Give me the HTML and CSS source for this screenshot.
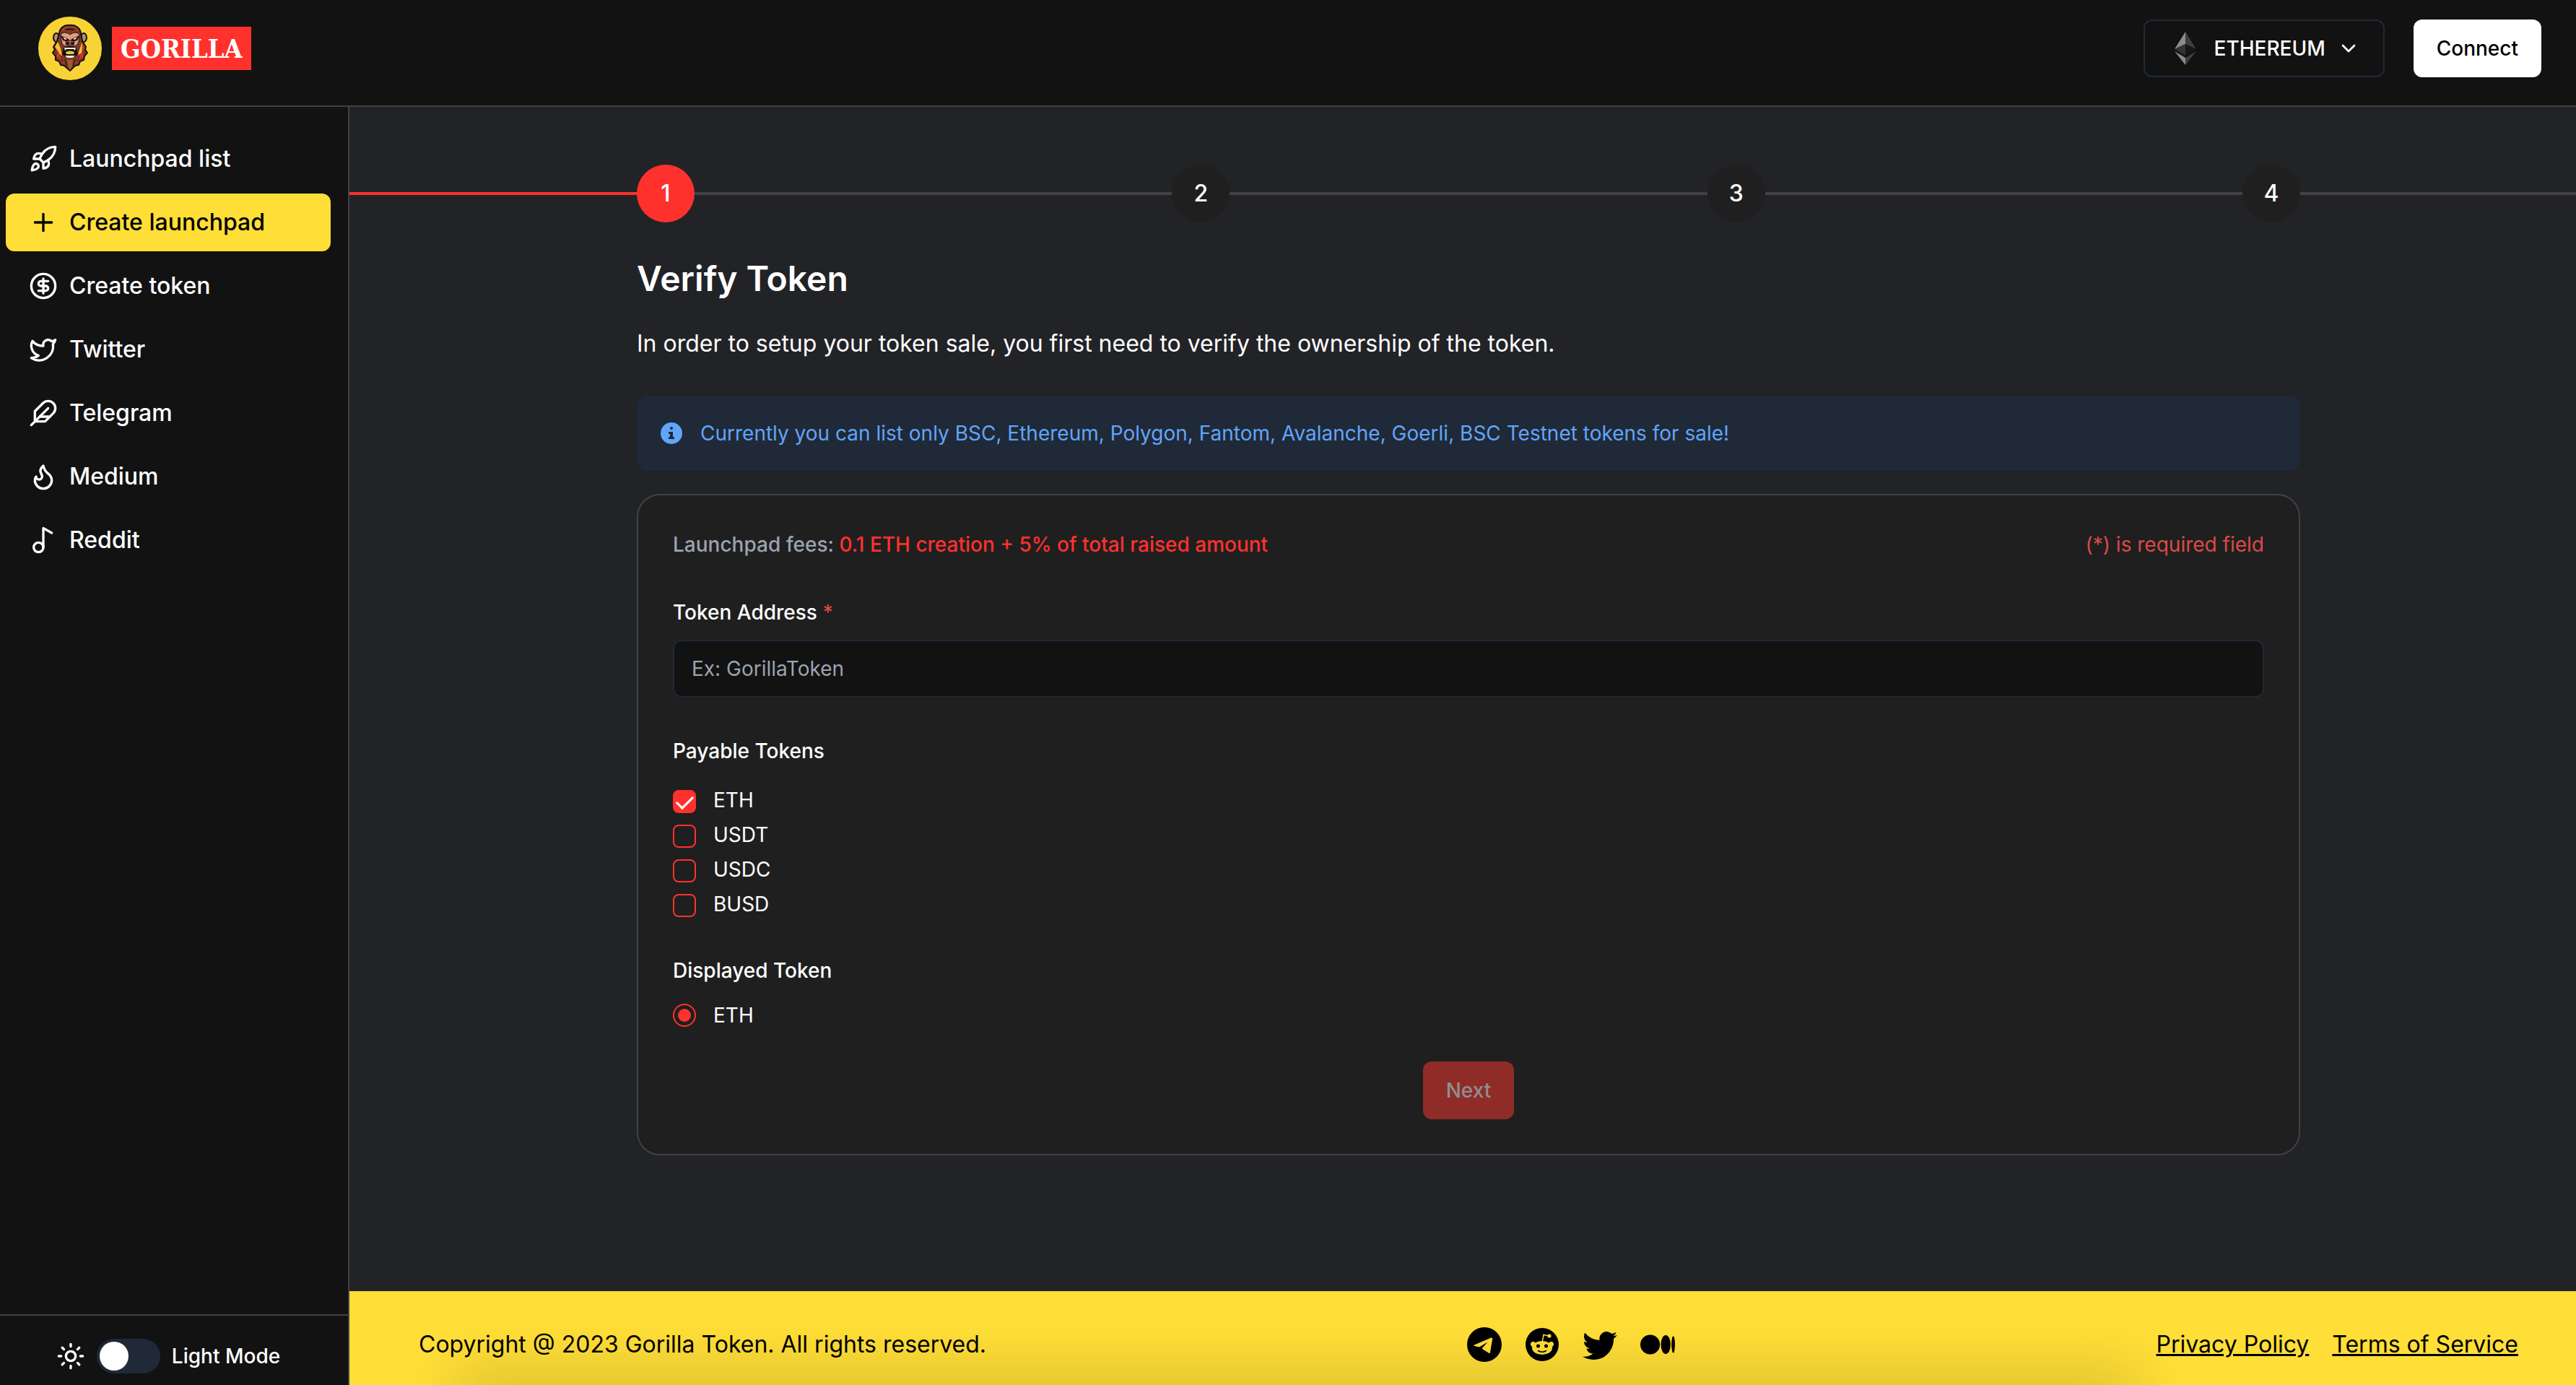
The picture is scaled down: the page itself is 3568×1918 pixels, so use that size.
FILE: index.html
```html
<!DOCTYPE html>
<html lang="en">
<head>
  <meta charset="UTF-8">
  <meta name="viewport" content="width=device-width, initial-scale=1.0">
  <title>Gorilla Launchpad</title>
  <link rel="stylesheet" href="styles.css">
</head>
<body>
  <header class="header">
    <a href="#" class="logo">
      <svg class="logo-icon" viewBox="0 0 88 88" aria-hidden="true">
        <circle cx="44" cy="44" r="44" fill="#f8d335"/>
        <!-- ears -->
        <ellipse cx="25" cy="29" rx="4" ry="6" fill="#b98a78" stroke="#17110f" stroke-width="2"/>
        <ellipse cx="63" cy="29" rx="4" ry="6" fill="#b98a78" stroke="#17110f" stroke-width="2"/>
        <!-- head and beard -->
        <path d="M44 12C35 11 30 16 29 23L26 34L21 42L23 46L20 50L24 55L24 60L29 62L31 67L36 68L44 75L51 68L56 67L58 62L63 60L64 55L68 50L65 46L66 42L61 34L59 23C58 16 52 11 44 12Z" fill="#7b3a22" stroke="#17110f" stroke-width="2"/>
        <path d="M32 21C33 15 38 14 44 14S55 15 56 21L52 18H36Z" fill="#b5392f"/>
        <path d="M36 18C40 15 48 15 52 18L48 19H40Z" fill="#3f1d14"/>
        <path d="M29 36L24 43L27 50L25 55L32 60L36 66L33 54L29 46ZM59 36L64 43L61 50L63 55L56 60L52 66L55 54L59 46Z" fill="#c8392f"/>
        <path d="M27 35L23 42L27 47L30 52L33 54L31 44ZM61 35L58 43L55 53L60 50Z" fill="#f0c433"/>
        <!-- face -->
        <path d="M31 26C33 20 40 22 44 25C48 22 55 20 57 26L56 34C55 40 50 42 44 42S33 40 32 34Z" fill="#e59a80" stroke="#17110f" stroke-width="1"/>
        <path d="M31 26L42 31V35L34 33ZM57 26L46 31V35L54 33Z" fill="#17110f"/>
        <path d="M34 28L40 31L37 32ZM54 28L48 31L51 32Z" fill="#fff"/>
        <path d="M38 35C40 32 48 32 50 35L49 40H39Z" fill="#b9523f" stroke="#17110f" stroke-width="1"/>
        <circle cx="41" cy="37" r="2" fill="#17110f"/>
        <circle cx="47" cy="37" r="2" fill="#17110f"/>
        <!-- mouth -->
        <path d="M35 43C40 40 48 40 53 43L55 52L49 57H39L33 52Z" fill="#17110f"/>
        <path d="M36 43L52 43L51 47L49 45H39L37 47ZM37 54L51 54L48 57H40Z" fill="#f4f0ec"/>
        <path d="M38 49C42 47 46 47 50 49L49 52H39Z" fill="#f0c433"/>
        <path d="M40 60H48L46 71L44 74L42 71Z" fill="#a75a2c"/>
        <path d="M37 59L40 68M51 59L48 68M31 54L34 62M57 54L54 62" stroke="#17110f" stroke-width="1" fill="none"/>
      </svg>
      <span class="logo-text">GORILLA</span>
    </a>
    <div class="header-actions">
      <button class="network-btn" type="button">
        <svg class="eth-icon" viewBox="0 0 48 48" aria-hidden="true">
          <path d="M24 1V18L9 25Z" fill="#8c8c8f"/>
          <path d="M24 1V18L39 25Z" fill="#3e3e42"/>
          <path d="M24 18V34L9 25Z" fill="#343436"/>
          <path d="M24 18V34L39 25Z" fill="#18181a"/>
          <path d="M24 37V47L9 28Z" fill="#8c8c8f"/>
          <path d="M24 37V47L39 28Z" fill="#3e3e42"/>
        </svg>
        ETHEREUM
        <svg class="chevron" viewBox="0 0 24 24" aria-hidden="true"><path d="m6 9 6 6 6-6"/></svg>
      </button>
      <button class="connect-btn" type="button">Connect</button>
    </div>
  </header>

  <div class="layout">
    <aside class="sidebar">
      <nav class="menu">
        <a href="#" class="menu-item">
          <svg viewBox="0 0 24 24"><path d="M4.5 16.5c-1.5 1.26-2 5-2 5s3.74-.5 5-2c.71-.84.7-2.13-.09-2.91a2.18 2.18 0 0 0-2.91-.09z"/><path d="m12 15-3-3a22 22 0 0 1 2-3.95A12.88 12.88 0 0 1 22 2c0 2.72-.78 7.5-6 11a22.35 22.35 0 0 1-4 2z"/><path d="M9 12H4s.55-3.03 2-4c1.62-1.08 5 0 5 0"/><path d="M12 15v5s3.03-.55 4-2c1.08-1.62 0-5 0-5"/></svg>
          Launchpad list
        </a>
        <a href="#" class="menu-item active">
          <svg viewBox="0 0 24 24"><path d="M5 12h14"/><path d="M12 5v14"/></svg>
          Create launchpad
        </a>
        <a href="#" class="menu-item">
          <svg viewBox="0 0 24 24"><circle cx="12" cy="12" r="10"/><path d="M16 8h-6a2 2 0 1 0 0 4h4a2 2 0 1 1 0 4H8"/><path d="M12 18V6"/></svg>
          Create token
        </a>
        <a href="#" class="menu-item">
          <svg viewBox="0 0 24 24"><path d="M22 4s-.7 2.1-2 3.4c1.6 10-9.4 17.3-18 11.6 2.2.1 4.4-.6 6-2C3 15.5.5 9.6 3 5c2.2 2.6 5.6 4.1 9 4-.9-4.2 4-6.6 7-3.8 1.1 0 3-1.2 3-1.2z"/></svg>
          Twitter
        </a>
        <a href="#" class="menu-item">
          <svg viewBox="0 0 24 24"><path d="M20.24 12.24a6 6 0 0 0-8.49-8.49L5 10.5V19h8.5z"/><path d="M16 8 2 22"/><path d="M17.5 15H9"/></svg>
          Telegram
        </a>
        <a href="#" class="menu-item">
          <svg viewBox="0 0 24 24"><path d="M8.5 14.5A2.5 2.5 0 0 0 11 12c0-1.38-.5-2-1-3-1.072-2.143-.224-4.054 2-6 .5 2.5 2 4.9 4 6.5 2 1.6 3 3.5 3 5.5a7 7 0 1 1-14 0c0-1.153.433-2.294 1-3a2.5 2.5 0 0 0 2.5 2.5z"/></svg>
          Medium
        </a>
        <a href="#" class="menu-item">
          <svg viewBox="0 0 24 24"><circle cx="8" cy="18" r="4"/><path d="M12 18V2l7 4"/></svg>
          Reddit
        </a>
      </nav>
      <div class="theme">
        <svg viewBox="0 0 24 24"><circle cx="12" cy="12" r="4"/><path d="M12 2v2M12 20v2M4.93 4.93l1.41 1.41M17.66 17.66l1.41 1.41M2 12h2M20 12h2M6.34 17.66l-1.41 1.41M19.07 4.93l-1.41 1.41"/></svg>
        <input type="checkbox" id="theme" class="toggle">
        <label for="theme">Light Mode</label>
      </div>
    </aside>

    <div class="page">
      <main class="main">
        <div class="stepper">
          <span class="line lead"></span>
          <div class="steps">
            <span class="step current">1</span>
            <span class="line"></span>
            <span class="step">2</span>
            <span class="line"></span>
            <span class="step">3</span>
            <span class="line"></span>
            <span class="step">4</span>
          </div>
          <span class="line tail"></span>
        </div>

        <div class="content">
          <h1>Verify Token</h1>
          <p class="intro">In order to setup your token sale, you first need to verify the ownership of the token.</p>

          <div class="alert">
            <svg viewBox="0 0 32 32" aria-hidden="true">
              <circle cx="16" cy="16" r="15" fill="#60a5fa"/>
              <circle cx="16" cy="9" r="2" fill="#202937"/>
              <path d="M12 14H18V21H20V24H12V21H14V17H12Z" fill="#202937"/>
            </svg>
            Currently you can list only BSC, Ethereum, Polygon, Fantom, Avalanche, Goerli, BSC Testnet tokens for sale!
          </div>

          <form class="card">
            <div class="fees">
              <span>Launchpad fees: <strong>0.1 ETH creation + 5% of total raised amount</strong></span>
              <span class="required">(*) is required field</span>
            </div>

            <label class="field-label" for="address">Token Address <span class="star">*</span></label>
            <input type="text" id="address" class="text-input" placeholder="Ex: GorillaToken">

            <fieldset class="payable">
              <legend class="field-label">Payable Tokens</legend>
              <label class="option"><input type="checkbox" name="payable" value="ETH" checked>ETH</label>
              <label class="option"><input type="checkbox" name="payable" value="USDT">USDT</label>
              <label class="option"><input type="checkbox" name="payable" value="USDC">USDC</label>
              <label class="option"><input type="checkbox" name="payable" value="BUSD">BUSD</label>
            </fieldset>

            <fieldset class="displayed">
              <legend class="field-label">Displayed Token</legend>
              <label class="option"><input type="radio" name="displayed" value="ETH" checked>ETH</label>
            </fieldset>

            <button class="next-btn" type="submit" disabled>Next</button>
          </form>
        </div>
      </main>

      <footer class="footer">
        <p>Copyright @ 2023 Gorilla Token. All rights reserved.</p>
        <div class="social">
          <a href="#" aria-label="Telegram">
            <svg viewBox="0 0 48 48"><circle cx="24" cy="24" r="24"/><path d="M10 24.500L33.500 14.500Q35.500 14 35.200 16L32 35Q31.500 36.500 30 35.800L20.500 29.500L28.500 20.500L17 27.500L10 26Q8.500 25.200 10 24.500Z" fill="#ffde37"/></svg>
          </a>
          <a href="#" aria-label="Reddit">
            <svg viewBox="0 0 48 48">
              <circle cx="24" cy="24" r="23"/>
              <g fill="#ffde37">
                <ellipse cx="24" cy="28.500" rx="14" ry="9.500"/>
                <circle cx="11.500" cy="23.500" r="3.500"/>
                <circle cx="36.500" cy="23.500" r="3.500"/>
                <circle cx="34" cy="12" r="2.600"/>
              </g>
              <path d="M24.500 19L26 10.500L33 12" fill="none" stroke="#ffde37" stroke-width="1.500"/>
              <circle cx="18.500" cy="26" r="2.500"/>
              <circle cx="29.500" cy="26" r="2.500"/>
              <path d="M18.500 32.500Q24 36 29.500 32.500" fill="none" stroke="#000" stroke-width="1.500" stroke-linecap="round"/>
            </svg>
          </a>
          <a href="#" aria-label="Twitter">
            <svg viewBox="0 0 16 16"><path d="M5.026 15c6.038 0 9.341-5.003 9.341-9.334 0-.14 0-.282-.006-.422A6.685 6.685 0 0 0 16 3.542a6.658 6.658 0 0 1-1.889.518 3.301 3.301 0 0 0 1.447-1.817 6.533 6.533 0 0 1-2.087.793A3.286 3.286 0 0 0 7.875 6.03a9.325 9.325 0 0 1-6.767-3.429 3.289 3.289 0 0 0 1.018 4.382A3.323 3.323 0 0 1 .64 6.575v.045a3.288 3.288 0 0 0 2.632 3.218 3.203 3.203 0 0 1-.865.115 3.23 3.23 0 0 1-.614-.057 3.283 3.283 0 0 0 3.067 2.277A6.588 6.588 0 0 1 .78 13.58a6.32 6.32 0 0 1-.78-.045A9.344 9.344 0 0 0 5.026 15z"/></svg>
          </a>
          <a href="#" aria-label="Medium">
            <svg viewBox="0 0 48 48"><circle cx="13.600" cy="24" r="13.600"/><ellipse cx="35.200" cy="24" rx="6.700" ry="13"/><ellipse cx="45.600" cy="24" rx="2.400" ry="11.700"/></svg>
          </a>
        </div>
        <div class="legal">
          <a href="#">Privacy Policy</a>
          <a href="#">Terms of Service</a>
        </div>
      </footer>
    </div>
  </div>
</body>
</html>
```
FILE: styles.css
```css
* {
  box-sizing: border-box;
}
body {
  margin: 0;
  min-height: 100vh;
  display: flex;
  flex-direction: column;
  background-color: #222327;
  color: #fff;
  font-family: Inter, "Liberation Sans", sans-serif;
  font-size: 28px;
  line-height: 40px;
}
button, input {
  font: inherit;
}
a {
  color: inherit;
  text-decoration: none;
}
h1, p {
  margin: 0;
}
svg {
  display: block;
  flex-shrink: 0;
}

/* header */
.header {
  display: flex;
  align-items: center;
  justify-content: space-between;
  padding: 23px 48px 35px 53px;
  background-color: #121212;
  border-bottom: 2px solid #414147;
}
.logo {
  display: flex;
  align-items: center;
  gap: 14px;
}
.logo-icon {
  width: 88px;
  height: 88px;
}
.logo-text {
  padding: 0 12px;
  background-color: #ff312d;
  font-family: "DejaVu Serif Condensed", "DejaVu Serif", serif;
  font-size: 36px;
  font-weight: bold;
  line-height: 60px;
}
.header-actions {
  display: flex;
  gap: 40px;
}
.network-btn, .connect-btn {
  height: 80px;
  padding: 0 32px;
  border-radius: 12px;
  font-weight: 500;
  cursor: pointer;
}
.network-btn {
  display: flex;
  align-items: center;
  gap: 16px;
  background-color: transparent;
  border: 2px solid #1f2937;
  color: #fff;
}
.eth-icon {
  width: 48px;
  height: 48px;
}
.chevron {
  width: 32px;
  height: 32px;
}
.connect-btn {
  background-color: #fff;
  border: none;
  color: #000;
}
.chevron, .menu-item svg, .theme svg {
  fill: none;
  stroke: currentColor;
  stroke-width: 2;
  stroke-linecap: round;
  stroke-linejoin: round;
}

/* sidebar */
.layout {
  flex: 1;
  display: flex;
}
.sidebar {
  width: 484px;
  flex-shrink: 0;
  display: flex;
  flex-direction: column;
  justify-content: space-between;
  background-color: #121212;
  border-right: 2px solid #414147;
}
.menu {
  display: flex;
  flex-direction: column;
  gap: 8px;
  padding: 32px 24px 32px 8px;
}
.menu-item {
  display: flex;
  align-items: center;
  gap: 16px;
  height: 80px;
  padding: 0 32px;
  border-radius: 12px;
  font-size: 32px;
  font-weight: 500;
}
.menu-item.active {
  background-color: #ffde37;
  color: #000;
}
.menu-item svg, .theme svg {
  width: 40px;
  height: 40px;
}
.theme {
  display: flex;
  align-items: center;
  justify-content: center;
  gap: 16px;
  padding: 32px 16px 16px 0;
  border-top: 2px solid #414147;
  font-weight: 500;
}
.toggle {
  appearance: none;
  display: flex;
  width: 88px;
  height: 48px;
  margin: 0;
  padding: 4px;
  border-radius: 24px;
  background-color: #1f2937;
}
.toggle::before {
  content: "";
  width: 40px;
  height: 40px;
  border-radius: 50%;
  background-color: #fff;
}
.toggle:checked {
  justify-content: flex-end;
}

/* page */
.page {
  flex: 1;
  min-width: 0;
  display: flex;
  flex-direction: column;
}
.main {
  flex: 1;
  padding: 80px 0;
}
.stepper, .steps {
  display: flex;
  align-items: center;
}
.steps {
  flex: 0 1 2304px;
}
.line {
  flex: 1;
  height: 4px;
  background-color: #414147;
}
.lead {
  flex: 1 0 16px;
  background-color: #ff312d;
}
.step {
  width: 80px;
  height: 80px;
  border-radius: 50%;
  background-color: #1f1f1f;
  font-size: 32px;
  font-weight: 500;
  line-height: 80px;
  text-align: center;
}
.step.current {
  background-color: #ff312d;
}
.content {
  max-width: 2320px;
  margin: 0 auto;
  padding: 48px 0 0 16px;
}
h1 {
  margin-bottom: 36px;
  font-size: 48px;
  font-weight: 600;
  line-height: 60px;
}
.intro {
  margin-bottom: 48px;
  font-size: 32px;
  line-height: 48px;
}
.alert {
  display: flex;
  align-items: center;
  gap: 24px;
  margin-bottom: 32px;
  padding: 32px;
  border-radius: 16px;
  background-color: #202937;
  color: #60a5fa;
}
.alert svg {
  width: 32px;
  height: 32px;
}

/* form card */
.card {
  padding: 48px;
  border: 2px solid #414147;
  border-radius: 32px;
  background-color: #1f1f1f;
}
.fees {
  display: flex;
  justify-content: space-between;
  margin-bottom: 56px;
  color: #9ca3af;
  font-weight: 500;
}
.fees strong {
  color: #ff312d;
  font-weight: 500;
}
.fees .required {
  color: #dc4a46;
  font-weight: 400;
}
.star {
  color: #dc4a46;
}
.field-label {
  display: block;
  padding: 0;
  margin-bottom: 20px;
  font-weight: 500;
  line-height: 36px;
}
.text-input {
  display: block;
  width: 100%;
  height: 80px;
  margin-bottom: 56px;
  padding: 0 24px;
  border: 2px solid #1f2937;
  border-radius: 12px;
  background-color: #121212;
  color: #fff;
}
.text-input::placeholder {
  color: #9ca3af;
  opacity: 1;
}
fieldset {
  margin: 0;
  padding: 0;
  border: none;
}
.payable {
  margin-bottom: 48px;
}
.payable .field-label {
  margin-bottom: 28px;
}
.displayed {
  margin-bottom: 40px;
}
.option {
  display: flex;
  align-items: center;
  gap: 24px;
  height: 48px;
}
.payable .option {
  align-items: flex-start;
  line-height: 44px;
}
.option input {
  appearance: none;
  display: grid;
  place-items: center;
  width: 32px;
  height: 32px;
  margin: 0;
  border: 2px solid #ff312d;
  border-radius: 8px;
}
.payable .option input {
  margin-top: 8px;
}
.option input[type="checkbox"]:checked {
  background-color: #ff312d;
}
/* tick */
.option input[type="checkbox"]:checked::before {
  content: "";
  width: 20px;
  height: 10px;
  margin-bottom: 4px;
  border-left: 3px solid #fff;
  border-bottom: 3px solid #fff;
  transform: rotate(-45deg);
}
.option input[type="radio"] {
  border-radius: 50%;
}
.option input[type="radio"]:checked::before {
  content: "";
  width: 18px;
  height: 18px;
  border-radius: 50%;
  background-color: #ff312d;
}
.next-btn {
  display: block;
  height: 80px;
  margin: 0 auto;
  padding: 0 32px;
  border: none;
  border-radius: 12px;
  background-color: #ff312d;
  color: #fff;
  font-weight: 500;
}
.next-btn:disabled {
  background-color: #8f2c28;
  color: #8f8f8f;
}

/* footer */
.footer {
  position: relative;
  overflow: hidden;
  display: flex;
  align-items: center;
  justify-content: space-between;
  padding: 50px 80px 32px 96px;
  background-color: #ffde37;
  color: #000;
  font-size: 32px;
  line-height: 48px;
}
.footer::after {
  content: "";
  position: absolute;
  left: 160px;
  right: 620px;
  bottom: -24px;
  height: 24px;
  box-shadow: 0 0 80px 12px rgba(0, 0, 0, 0.2);
}
.social, .legal {
  display: flex;
  gap: 32px;
}
.social svg {
  width: 48px;
  height: 48px;
}
.legal a {
  text-decoration: underline;
}
```
